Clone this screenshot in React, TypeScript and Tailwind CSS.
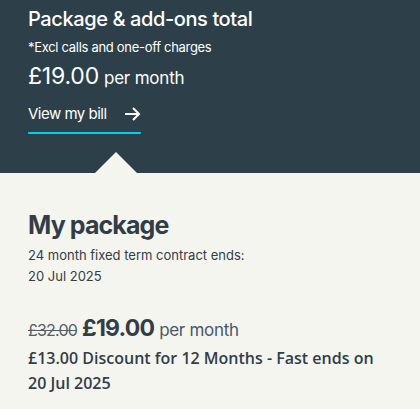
import React from "react";

export default function App() {
  return (
    <div className="w-[420px] h-[409px] overflow-hidden bg-[#f5f5f0]" style={{ fontFamily: "Inter, 'Noto Sans', sans-serif" }}>
      <div className="relative bg-[#2d3f48] h-[173px] px-[28px] pt-[5px] text-white">
        <h1 className="text-[20px] leading-[28px] font-medium tracking-[-0.4px]">Package &amp; add-ons total</h1>
        <p className="text-[13px] leading-[18px] mt-[5px] tracking-[-0.3px]">*Excl calls and one-off charges</p>
        <p className="mt-[5px] flex items-baseline gap-[5px]">
          <span className="text-[23px] leading-[30px] tracking-[-0.2px]">£19.00</span>
          <span className="text-[17px] tracking-[-0.2px]">per month</span>
        </p>
        <a className="mt-[12px] inline-flex items-center justify-between w-[113px] pb-[8px] border-b-2 border-[#00cfe6] rounded-[1px] text-[15px] leading-[20px] tracking-[-0.5px] whitespace-nowrap">
          <span>View my bill</span>
          <svg width="17" height="16" viewBox="0 0 17 16" fill="none" stroke="white" strokeWidth="2">
            <path d="M1 8h14M9 2l6 6-6 6" />
          </svg>
        </a>
        <div className="absolute left-[95px] bottom-0 w-0 h-0 border-l-[21px] border-r-[21px] border-b-[21px] border-l-transparent border-r-transparent border-b-[#f5f5f0]" />
      </div>
      <div className="px-[28px] pt-[36px] text-[#333d47]">
        <h2 className="text-[25px] leading-[32px] font-bold tracking-[-0.9px]">My package</h2>
        <p className="mt-[4px] text-[13px] leading-[21px] tracking-[0px]">24 month fixed term contract ends:<br />20 Jul 2025</p>
        <p className="mt-[26px] flex items-baseline gap-[5px]">
          <span className="text-[16px] text-[#555d66] line-through tracking-[-0.8px]">£32.00</span>
          <span className="text-[23px] leading-[30px] font-bold tracking-[-0.8px]">£19.00</span>
          <span className="text-[17px] text-[#4a5866] tracking-[-0.3px]">per month</span>
        </p>
        <p className="mt-[2px] text-[16px] leading-[25px] font-semibold text-[#333d47]" style={{ fontFamily: "'Open Sans', sans-serif" }}>
          £13.00 Discount for 12 Months - Fast ends on<br />20 Jul 2025
        </p>
      </div>
    </div>
  );
}
